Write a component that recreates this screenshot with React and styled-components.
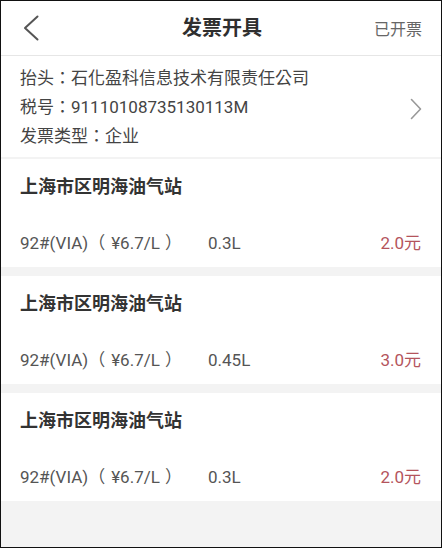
import React from "react";
import styled, { createGlobalStyle } from "styled-components";

const GlobalStyle = createGlobalStyle`
  html, body {
    margin: 0;
    padding: 0;
    background: #f3f3f3;
  }
  * {
    box-sizing: border-box;
  }
`;

const Page = styled.div`
  width: 442px;
  height: 548px;
  border: 1px solid #111;
  background: #f3f3f3;
  font-family: Roboto, "Noto Sans CJK SC", sans-serif;
  display: flex;
  flex-direction: column;
  overflow: hidden;
`;

const Header = styled.header`
  height: 55px;
  flex-shrink: 0;
  background: #fff;
  border-bottom: 1px solid #e6e6e6;
  display: grid;
  grid-template-columns: 80px 1fr 80px;
  align-items: center;
  padding: 0 19px 0 21px;
`;

const Back = styled.svg`
  width: 18px;
  height: 26px;
`;

const Title = styled.h1`
  margin: 0;
  text-align: center;
  font-size: 20px;
  font-weight: 700;
  color: #2f2f2f;
  line-height: 1;
`;

const HeaderLink = styled.span`
  justify-self: end;
  font-size: 16px;
  color: #666;
`;

const Invoice = styled.section`
  background: #fff;
  margin-bottom: 2px;
  padding: 8px 19px 6px 19px;
  display: flex;
  align-items: center;
  justify-content: space-between;
`;

const InvoiceLines = styled.div`
  display: flex;
  flex-direction: column;
`;

const InvoiceLine = styled.div`
  font-family: Roboto, "Noto Sans CJK TC", sans-serif;
  font-size: 17px;
  line-height: 29px;
  color: #444;
  white-space: nowrap;
`;

const Arrow = styled.svg`
  width: 12px;
  height: 22px;
  margin-top: 2px;
`;

const List = styled.div`
  display: flex;
  flex-direction: column;
  gap: 9px;
`;

const Card = styled.div`
  background: #fff;
  height: 108px;
  padding: 16px 20px 0 19px;
  display: flex;
  flex-direction: column;
  gap: 32px;
`;

const Station = styled.div`
  font-size: 18px;
  font-weight: 700;
  color: #333;
  line-height: 24px;
`;

const Row = styled.div`
  display: grid;
  grid-template-columns: 188px 1fr auto;
  align-items: center;
  font-family: Roboto, "Noto Sans CJK TC", sans-serif;
  font-size: 17px;
  line-height: 24px;
  color: #555;
  white-space: nowrap;
`;

const Paren = styled.span`
  margin: ${(p) => (p.open ? "0 6px 0 0" : "0 0 0 5px")};
`;

const Price = styled.span`
  color: #b4545c;
  font-size: 17px;
`;

const orders = [
  { station: "上海市区明海油气站", grade: "92#(VIA)", unit: "¥6.7/L", volume: "0.3L", amount: "2.0元" },
  { station: "上海市区明海油气站", grade: "92#(VIA)", unit: "¥6.7/L", volume: "0.45L", amount: "3.0元" },
  { station: "上海市区明海油气站", grade: "92#(VIA)", unit: "¥6.7/L", volume: "0.3L", amount: "2.0元" },
];

export default function App() {
  return (
    <Page>
      <GlobalStyle />
      <Header>
        <Back viewBox="0 0 18 26">
          <path d="M15.5 1.5 L3 13 L15.5 24.5" fill="none" stroke="#555" strokeWidth="2" strokeLinecap="round" strokeLinejoin="round" />
        </Back>
        <Title>发票开具</Title>
        <HeaderLink>已开票</HeaderLink>
      </Header>

      <Invoice>
        <InvoiceLines>
          <InvoiceLine>抬头：石化盈科信息技术有限责任公司</InvoiceLine>
          <InvoiceLine>税号：91110108735130113M</InvoiceLine>
          <InvoiceLine>发票类型：企业</InvoiceLine>
        </InvoiceLines>
        <Arrow viewBox="0 0 12 22">
          <path d="M1.5 1.5 L10.5 11 L1.5 20.5" fill="none" stroke="#999" strokeWidth="1.6" strokeLinecap="round" strokeLinejoin="round" />
        </Arrow>
      </Invoice>

      <List>
        {orders.map((o, i) => (
          <Card key={i}>
            <Station>{o.station}</Station>
            <Row>
              <span>
                {o.grade}
                <Paren open>（</Paren>
                {o.unit}
                <Paren>）</Paren>
              </span>
              <span>{o.volume}</span>
              <Price>{o.amount}</Price>
            </Row>
          </Card>
        ))}
      </List>
    </Page>
  );
}
